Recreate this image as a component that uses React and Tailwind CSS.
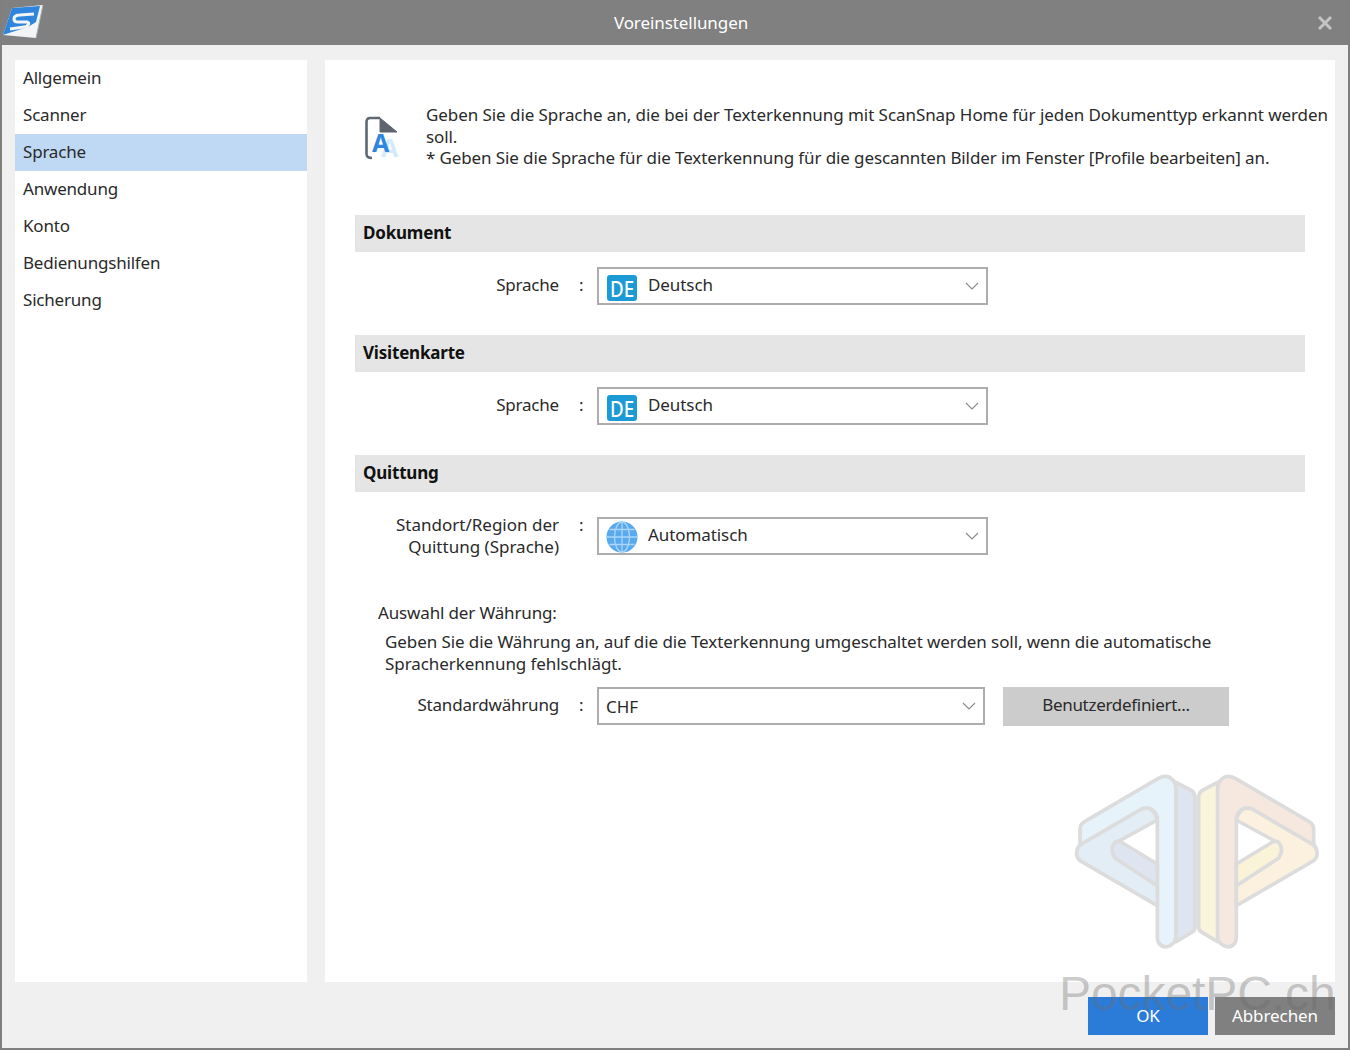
const font = { fontFamily: '"Noto Sans", "Open Sans", sans-serif' };

const menuItems = ["Allgemein", "Scanner", "Sprache", "Anwendung", "Konto", "Bedienungshilfen", "Sicherung"];

const Logo = () => (
  <svg width="45" height="45" viewBox="0 0 45 45" className="shrink-0">
    <polygon points="12,8 43,5 36,38 3,35" fill="#f2f4f6" />
    <polygon points="12,8 40,6 36,22 28,27 12,32 3,35" fill="#2f84de" />
    <path d="M34 14 L20 15 Q14 15 14 19 Q14 22 18 22 L27 22 Q30 23 28 25 Q27 27 24 27 L10 29" fill="none" stroke="#f2f4f6" strokeWidth="3" />
    <path d="M36 38 L43 5" stroke="#a6aeb6" strokeWidth="1" />
  </svg>
);

const DocIcon = () => (
  <svg width="50" height="50" viewBox="0 0 50 50" className="shrink-0" style={font}>
    <path d="M28 8 L18 8 Q14.500 8 14.500 12 L14.500 44 Q14.500 48 20 48" fill="none" stroke="#5f6875" strokeWidth="2.6" />
    <polygon points="28,8 45,22 28,22" fill="#5f6470" stroke="#5f6470" strokeWidth="1" strokeLinejoin="round" />
    <text x="29" y="47" fontSize="25" fontWeight="700" fill="#d3ebfd">A</text>
    <text x="20" y="42" fontSize="25" fontWeight="700" fill="#2f86e0">A</text>
  </svg>
);

const DeIcon = () => (
  <svg width="30" height="26" viewBox="0 0 30 26" className="shrink-0 mt-[4px]" style={font}>
    <rect width="30" height="26" rx="3" fill="#1b9ad6" />
    <text x="3" y="22" fontSize="21" fontWeight="500" fill="#fff" textLength="24" lengthAdjust="spacingAndGlyphs">DE</text>
  </svg>
);

const GlobeIcon = () => (
  <svg width="32" height="32" viewBox="0 0 32 32" className="shrink-0 mt-[2px] -ml-[1px] -mr-[1px]">
    <circle cx="16" cy="16" r="15.500" fill="#5aa9ee" />
    <g fill="none" stroke="#a9d6fa" strokeWidth="1.300">
      <ellipse cx="16" cy="16" rx="7.500" ry="15" />
      <path d="M16 1 V31 M1 16 H31 M3.500 8.500 H28.500 M3.500 23.500 H28.500" />
    </g>
  </svg>
);

const Chevron = () => (
  <svg width="14" height="8" viewBox="0 0 14 8" className="shrink-0">
    <path d="M1 1 L7 7 L13 1" fill="none" stroke="#8c8c8c" strokeWidth="1.200" />
  </svg>
);

const Dropdown = ({ icon, text, width = "w-[391px]" }) => (
  <div className={`${width} h-[38px] border-2 border-[#adadad] bg-white flex items-center ${icon ? "pl-[8px]" : "pl-[7px]"} pr-[7px] gap-[11px]`}>
    {icon}
    <span className={icon ? "flex-1 -mt-[2px]" : "flex-1 mt-[1px]"}>{text}</span>
    <Chevron />
  </div>
);

const Row = ({ label, children, twoLines }) => (
  <div className="flex items-center">
    <div className={`w-[204px] text-right leading-[22px] ${twoLines ? "-my-[4px] tracking-[0px]" : "-mt-[2px] tracking-[-0.2px]"}`}>{label}</div>
    <div className={`w-[38px] pl-[20px] leading-[22px] ${twoLines ? "-mt-[22px]" : "-mt-[3px]"}`}>:</div>
    {children}
  </div>
);

const SectionTitle = ({ children }) => (
  <div className="h-[37px] bg-[#e5e5e5] w-[950px] flex items-center pl-[8px] font-bold text-[#111] tracking-[-0.2px]">
    <span className="-mt-[2px]">{children}</span>
  </div>
);

const Half = ({ back, front, band, inner }) => (
  <g stroke="#dcdcdc" strokeWidth="11" strokeLinejoin="round">
    <path d="M378 70 L420 92 Q435 100 435 115 L435 505 Q435 515 425 520 L378 548 Z" fill={back} />
    <path d="M90 258 L90 210 Q90 195 105 187 L325 58 Q350 45 365 60 Q378 70 378 90 L378 530 Q378 550 360 560 Q340 570 326 552 Q322 546 322 535 L322 175 Q310 138 275 150 Z" fill={front} />
    <path d="M90 258 L275 150 Q310 138 322 183 L205 247 Q180 272 195 297 L322 380 L322 440 L90 305 Q78 295 80 280 Q82 265 90 258 Z" fill={band} />
    <path d="M195 250 Q205 243 218 252 L322 315 L322 380 L195 297 Q178 272 195 250 Z" fill={inner} />
  </g>
);

const Watermark = () => (
  <div className="absolute left-[1050px] top-[759px] w-[300px] h-[290px] pointer-events-none">
    <svg width="300" height="290" viewBox="0 0 900 870">
      <Half back="#dee5f1" front="#e6f3fb" band="#e3edf6" inner="#dee5f1" />
      <g transform="translate(881 0) scale(-1 1)">
        <Half back="#fbf4dc" front="#f7e8df" band="#fcf1df" inner="#fbf3d8" />
      </g>
    </svg>
    <div
      className="absolute left-[9px] top-[205px] text-[48px] leading-[60px] text-[#6b6b6b]/35 whitespace-nowrap"
      style={{ fontFamily: '"Liberation Sans", sans-serif' }}
    >
      PocketPC.ch
    </div>
  </div>
);

export default function App() {
  return (
    <div className="relative w-[1350px] h-[1050px] bg-[#f0f0f0] border-x-2 border-b-2 border-[#7f7f7f] text-[17px] text-[#2a2a2a] tracking-[-0.08px] flex flex-col overflow-hidden" style={font}>
      <div className="h-[45px] -mx-[2px] bg-[#808080] flex items-center text-white shrink-0">
        <Logo />
        <div className="flex-1 text-center">Voreinstellungen</div>
        <svg width="16" height="16" viewBox="0 0 16 16" className="mr-[17px]">
          <path d="M2 2 L14 14 M14 2 L2 14" stroke="#c4c4c4" strokeWidth="3" />
        </svg>
      </div>

      <div className="flex flex-1 pl-[13px] pr-[13px] pt-[15px] gap-[18px]">
        <div className="w-[292px] h-[922px] bg-white tracking-[-0.2px]">
          {menuItems.map((item) => (
            <div key={item} className={`h-[37px] pl-[8px] pb-[2px] flex items-center ${item === "Sprache" ? "bg-[#bfd9f5]" : ""}`}>
              {item}
            </div>
          ))}
        </div>

        <div className="w-[1010px] h-[922px] bg-white pl-[30px] pt-[44px]">
          <div className="flex h-[111px]">
            <div className="w-[71px] pt-[6px] -ml-[3px] mr-[3px]">
              <DocIcon />
            </div>
            <div className="leading-[21.5px] w-[910px] whitespace-nowrap">
              <span className="tracking-[-0.06px]">Geben Sie die Sprache an, die bei der Texterkennung mit ScanSnap Home für jeden Dokumenttyp erkannt werden</span>
              <br />
              soll.
              <br />
              <span className="tracking-[-0.11px]">* Geben Sie die Sprache für die Texterkennung für die gescannten Bilder im Fenster [Profile bearbeiten] an.</span>
            </div>
          </div>

          <SectionTitle>Dokument</SectionTitle>
          <div className="pt-[15px] h-[83px]">
            <Row label="Sprache">
              <Dropdown icon={<DeIcon />} text="Deutsch" />
            </Row>
          </div>

          <SectionTitle>Visitenkarte</SectionTitle>
          <div className="pt-[15px] h-[83px]">
            <Row label="Sprache">
              <Dropdown icon={<DeIcon />} text="Deutsch" />
            </Row>
          </div>

          <SectionTitle>Quittung</SectionTitle>
          <div className="pt-[25px] h-[110px]">
            <Row twoLines label={<>Standort/Region der<br />Quittung (Sprache)</>}>
              <Dropdown icon={<GlobeIcon />} text="Automatisch" />
            </Row>
          </div>

          <div className="pl-[23px] leading-[22px] tracking-[-0.15px]">Auswahl der Währung:</div>
          <div className="pl-[30px] pt-[7px] leading-[22px] w-[880px]">
            Geben Sie die Währung an, auf die die Texterkennung umgeschaltet werden soll, wenn die automatische Spracherkennung fehlschlägt.
          </div>
          <div className="pt-[12px] flex items-start">
            <Row label="Standardwährung">
              <Dropdown text="CHF" width="w-[388px]" />
            </Row>
            <button className="ml-[18px] w-[226px] h-[39px] pb-[4px] bg-[#cccccc] text-[#2a2a2a] tracking-[-0.3px]">Benutzerdefiniert...</button>
          </div>
        </div>
      </div>

      <div className="h-[51px] shrink-0 flex justify-end gap-[7px] pr-[13px] mb-[13px] -mt-[1px] items-end text-white">
        <button className="w-[120px] h-[38px] bg-[#2b7cd9]">OK</button>
        <button className="w-[120px] h-[38px] bg-[#808080]">Abbrechen</button>
      </div>

      <div className="absolute -left-[2px] top-0">
        <Watermark />
      </div>
    </div>
  );
}
